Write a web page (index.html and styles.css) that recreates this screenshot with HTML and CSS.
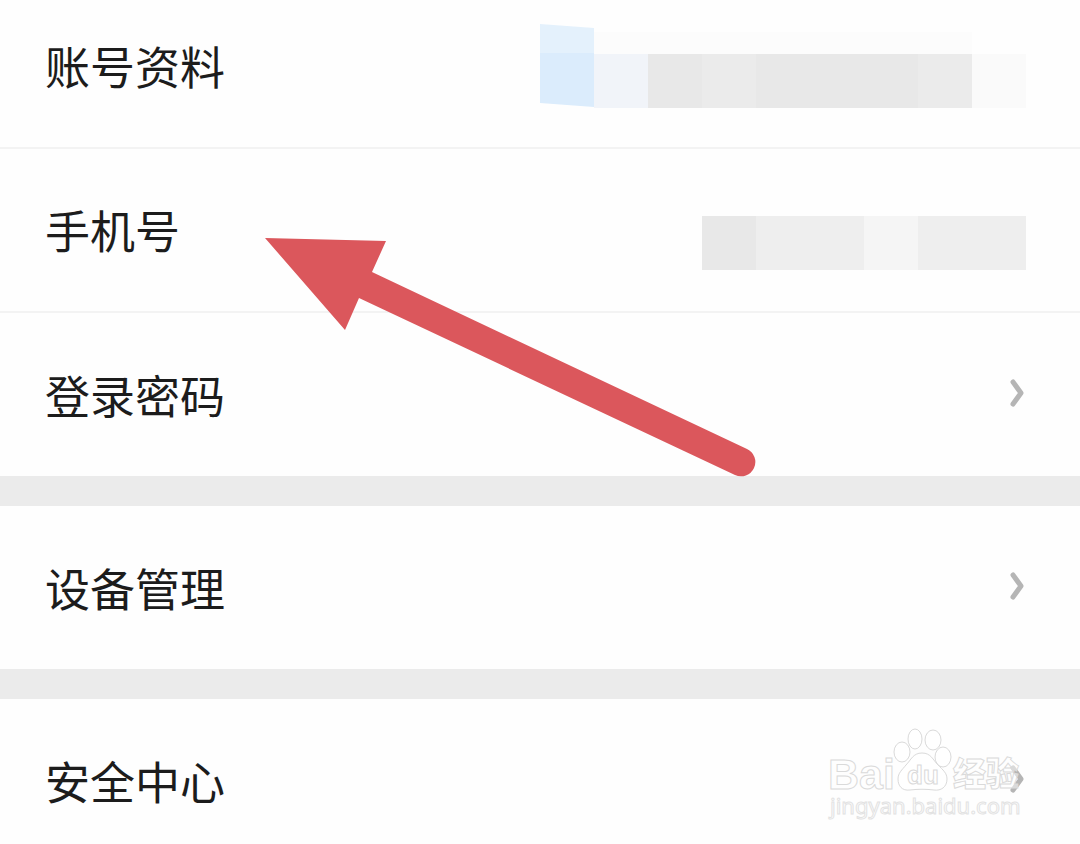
FILE: index.html
```html
<!doctype html>
<html lang="zh-CN">
    <head>
        <meta charset="UTF-8">
        <meta name="viewport" content="width=device-width, initial-scale=1">
        <title>账号与安全</title>
        <link rel="stylesheet" href="styles.css">
    </head>
    <body>
        <main class="settings">
            <section class="group">
                <a class="row row-first" href="#profile">
                    <span class="label">账号资料</span>
                    <svg class="mosaic" width="486" height="90" viewBox="0 0 486 90" aria-hidden="true">
                        <path fill="#fcfcfc" d="M54 9h378v22H54z"/>
                        <path fill="#e4f1fc" d="M0 1l54 4v26H0z"/>
                        <path fill="#dbecfc" d="M0 30h54v54L0 80z"/>
                        <path fill="#f1f4f9" d="M54 31h54v54H54z"/>
                        <path fill="#e8e8e8" d="M108 31h324v54H108z"/>
                        <path fill="#ebebeb" d="M162 31h54v54h-54zM378 31h54v54h-54z"/>
                        <path fill="#fafafa" d="M432 31h54v54h-54z"/>
                    </svg>
                </a>
                <a class="row" href="#phone">
                    <span class="label">手机号</span>
                    <svg class="mosaic" width="324" height="76" viewBox="0 0 324 76" aria-hidden="true">
                        <path fill="#eeeeee" d="M0 22h324v54H0z"/>
                        <path fill="#e8e8e8" d="M0 22h54v54H0z"/>
                        <path fill="#f5f5f5" d="M162 22h54v54h-54z"/>
                    </svg>
                </a>
                <a class="row" href="#password">
                    <span class="label">登录密码</span>
                    <svg class="chevron" width="18" height="36" viewBox="0 0 18 36" aria-hidden="true">
                        <path d="M5 3l8 11-8 11"/>
                    </svg>
                </a>
            </section>

            <section class="group">
                <a class="row" href="#devices">
                    <span class="label">设备管理</span>
                    <svg class="chevron" width="18" height="36" viewBox="0 0 18 36" aria-hidden="true">
                        <path d="M5 3l8 11-8 11"/>
                    </svg>
                </a>
            </section>

            <section class="group">
                <a class="row" href="#security">
                    <span class="label">安全中心</span>
                    <svg class="chevron" width="18" height="36" viewBox="0 0 18 36" aria-hidden="true">
                        <path d="M5 3l8 11-8 11"/>
                    </svg>
                </a>
            </section>

            <!-- arrow pointing at the phone number row -->
            <svg class="arrow" width="492" height="242" viewBox="0 0 492 242" aria-hidden="true">
                <path d="M1 1l121 3-14 31 375 177a14 14 0 0 1-12 26L95 61 81 93z"/>
            </svg>

            <svg class="watermark" width="210" height="100" viewBox="0 0 210 100" role="img" aria-label="Baidu 经验">
                <ellipse cx="80" cy="26" rx="8" ry="10"/>
                <ellipse cx="93" cy="13" rx="7" ry="10"/>
                <ellipse cx="111" cy="14" rx="8" ry="10"/>
                <ellipse cx="121" cy="31" rx="8" ry="10"/>
                <path d="M100 27c9 0 11 7 16 12 5 5 9 8 9 14 0 8-6 12-13 11-8-1-16-1-24 0-8 1-12-4-12-11 0-6 4-9 8-14 5-5 7-12 16-12z"/>
                <text class="logo" x="6" y="63">Bai</text>
                <text class="du" x="85" y="58">du</text>
                <text class="logo-cn" x="131" y="60">经验</text>
                <text class="site" x="8" y="88">jingyan.baidu.com</text>
            </svg>
        </main>
    </body>
</html>
```
FILE: styles.css
```css
:root {
    --text: #1c1c1c;
    --line: #f3f3f3;
    --gap: #ebebeb;
    --red: #db575c;
}

* {
    box-sizing: border-box;
}

body {
    margin: 0;
    background-color: #fefefe;
    font-family: "Noto Sans CJK SC", sans-serif;
    color: var(--text);
}

.settings {
    position: relative;
    min-height: 100vh;
    overflow: hidden;
}

.group + .group {
    border-top: 30px solid var(--gap);
}

.row {
    display: flex;
    align-items: center;
    justify-content: space-between;
    height: 164px;
    padding: 4px 54px 0 45px;
    border-bottom: 2px solid var(--line);
    color: inherit;
    text-decoration: none;
}

.row:last-child {
    height: 163px;
    border-bottom: 0;
}

.row-first {
    height: 149px;
    padding-top: 0;
    padding-bottom: 11px;
}

.label {
    padding-bottom: 4px;
    font-size: 45px;
    line-height: 60px;
}

.mosaic, .chevron {
    flex: none;
}

.chevron path {
    fill: none;
    stroke: #b5b5b5;
    stroke-width: 5px;
    stroke-linecap: round;
    stroke-linejoin: round;
}

.arrow {
    position: absolute;
    top: 237px;
    left: 264px;
    fill: var(--red);
}

.watermark {
    position: absolute;
    top: 726px;
    right: 48px;
    fill: rgba(255, 255, 255, 0.5);
    stroke: #dadada;
    stroke-width: 1px;
}

.logo {
    font: bold 43px "Liberation Sans", sans-serif;
}

.du {
    font: bold 26px "Liberation Sans", sans-serif;
}

.logo-cn {
    font: 900 33px "Noto Sans CJK SC", sans-serif;
}

.site {
    font: 22px "Noto Sans", sans-serif;
    stroke: #e2e2e2;
}
```
